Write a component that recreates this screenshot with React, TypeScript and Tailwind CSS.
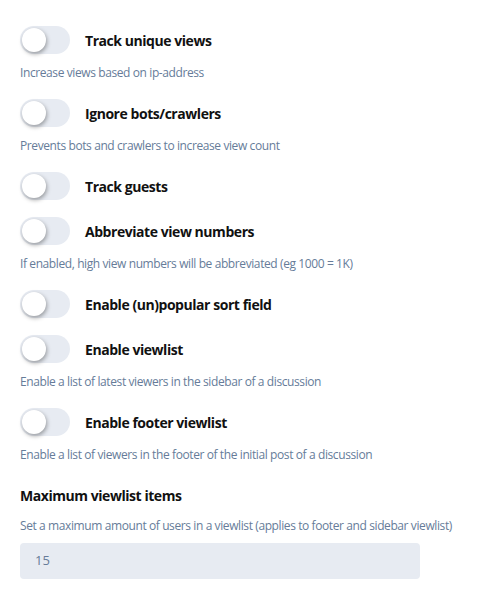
import React from 'react';

interface SettingToggle {
  label: string;
  help?: string;
}

const toggles: SettingToggle[] = [
  { label: 'Track unique views', help: 'Increase views based on ip-address' },
  { label: 'Ignore bots/crawlers', help: 'Prevents bots and crawlers to increase view count' },
  { label: 'Track guests' },
  { label: 'Abbreviate view numbers', help: 'If enabled, high view numbers will be abbreviated (eg 1000 = 1K)' },
  { label: 'Enable (un)popular sort field' },
  { label: 'Enable viewlist', help: 'Enable a list of latest viewers in the sidebar of a discussion' },
  { label: 'Enable footer viewlist', help: 'Enable a list of viewers in the footer of the initial post of a discussion' },
];

function Switch() {
  return (
    <div className="w-[50px] h-[28px] rounded-full bg-[#e7ebf2] flex items-center p-[2px] shrink-0">
      <div className="w-[24px] h-[24px] rounded-full bg-white shadow-[1px_2px_4px_rgba(0,0,0,0.35)]" />
    </div>
  );
}

export default function App() {
  return (
    <div
      className="w-[500px] h-[598px] bg-white pl-[20px] pt-[26px] overflow-hidden"
      style={{ fontFamily: '"Open Sans", "Noto Sans", Arial, sans-serif' }}
    >
      {toggles.map((t) => (
        <div key={t.label} className="mb-[17px]">
          <div className="flex items-center h-[28px]">
            <Switch />
            <span className="ml-[15px] text-[14px] font-bold text-[#111] tracking-[-0.45px]">{t.label}</span>
          </div>
          {t.help && (
            <p className="mt-[9px] text-[12px] leading-[19px] text-[#667c99] tracking-[-0.4px]">{t.help}</p>
          )}
        </div>
      ))}

      <div className="pt-[5px]">
        <h3 className="text-[14px] leading-[20px] font-bold text-[#111] tracking-[-0.45px]">Maximum viewlist items</h3>
        <p className="mt-[10px] text-[12px] leading-[19px] text-[#667c99] tracking-[-0.4px]">
          Set a maximum amount of users in a viewlist (applies to footer and sidebar viewlist)
        </p>
        <div className="mt-[8px] w-[400px] h-[36px] rounded-[4px] bg-[#e7ebf2] flex items-center px-[15px] text-[13px] text-[#667c99]">
          15
        </div>
      </div>
    </div>
  );
}
